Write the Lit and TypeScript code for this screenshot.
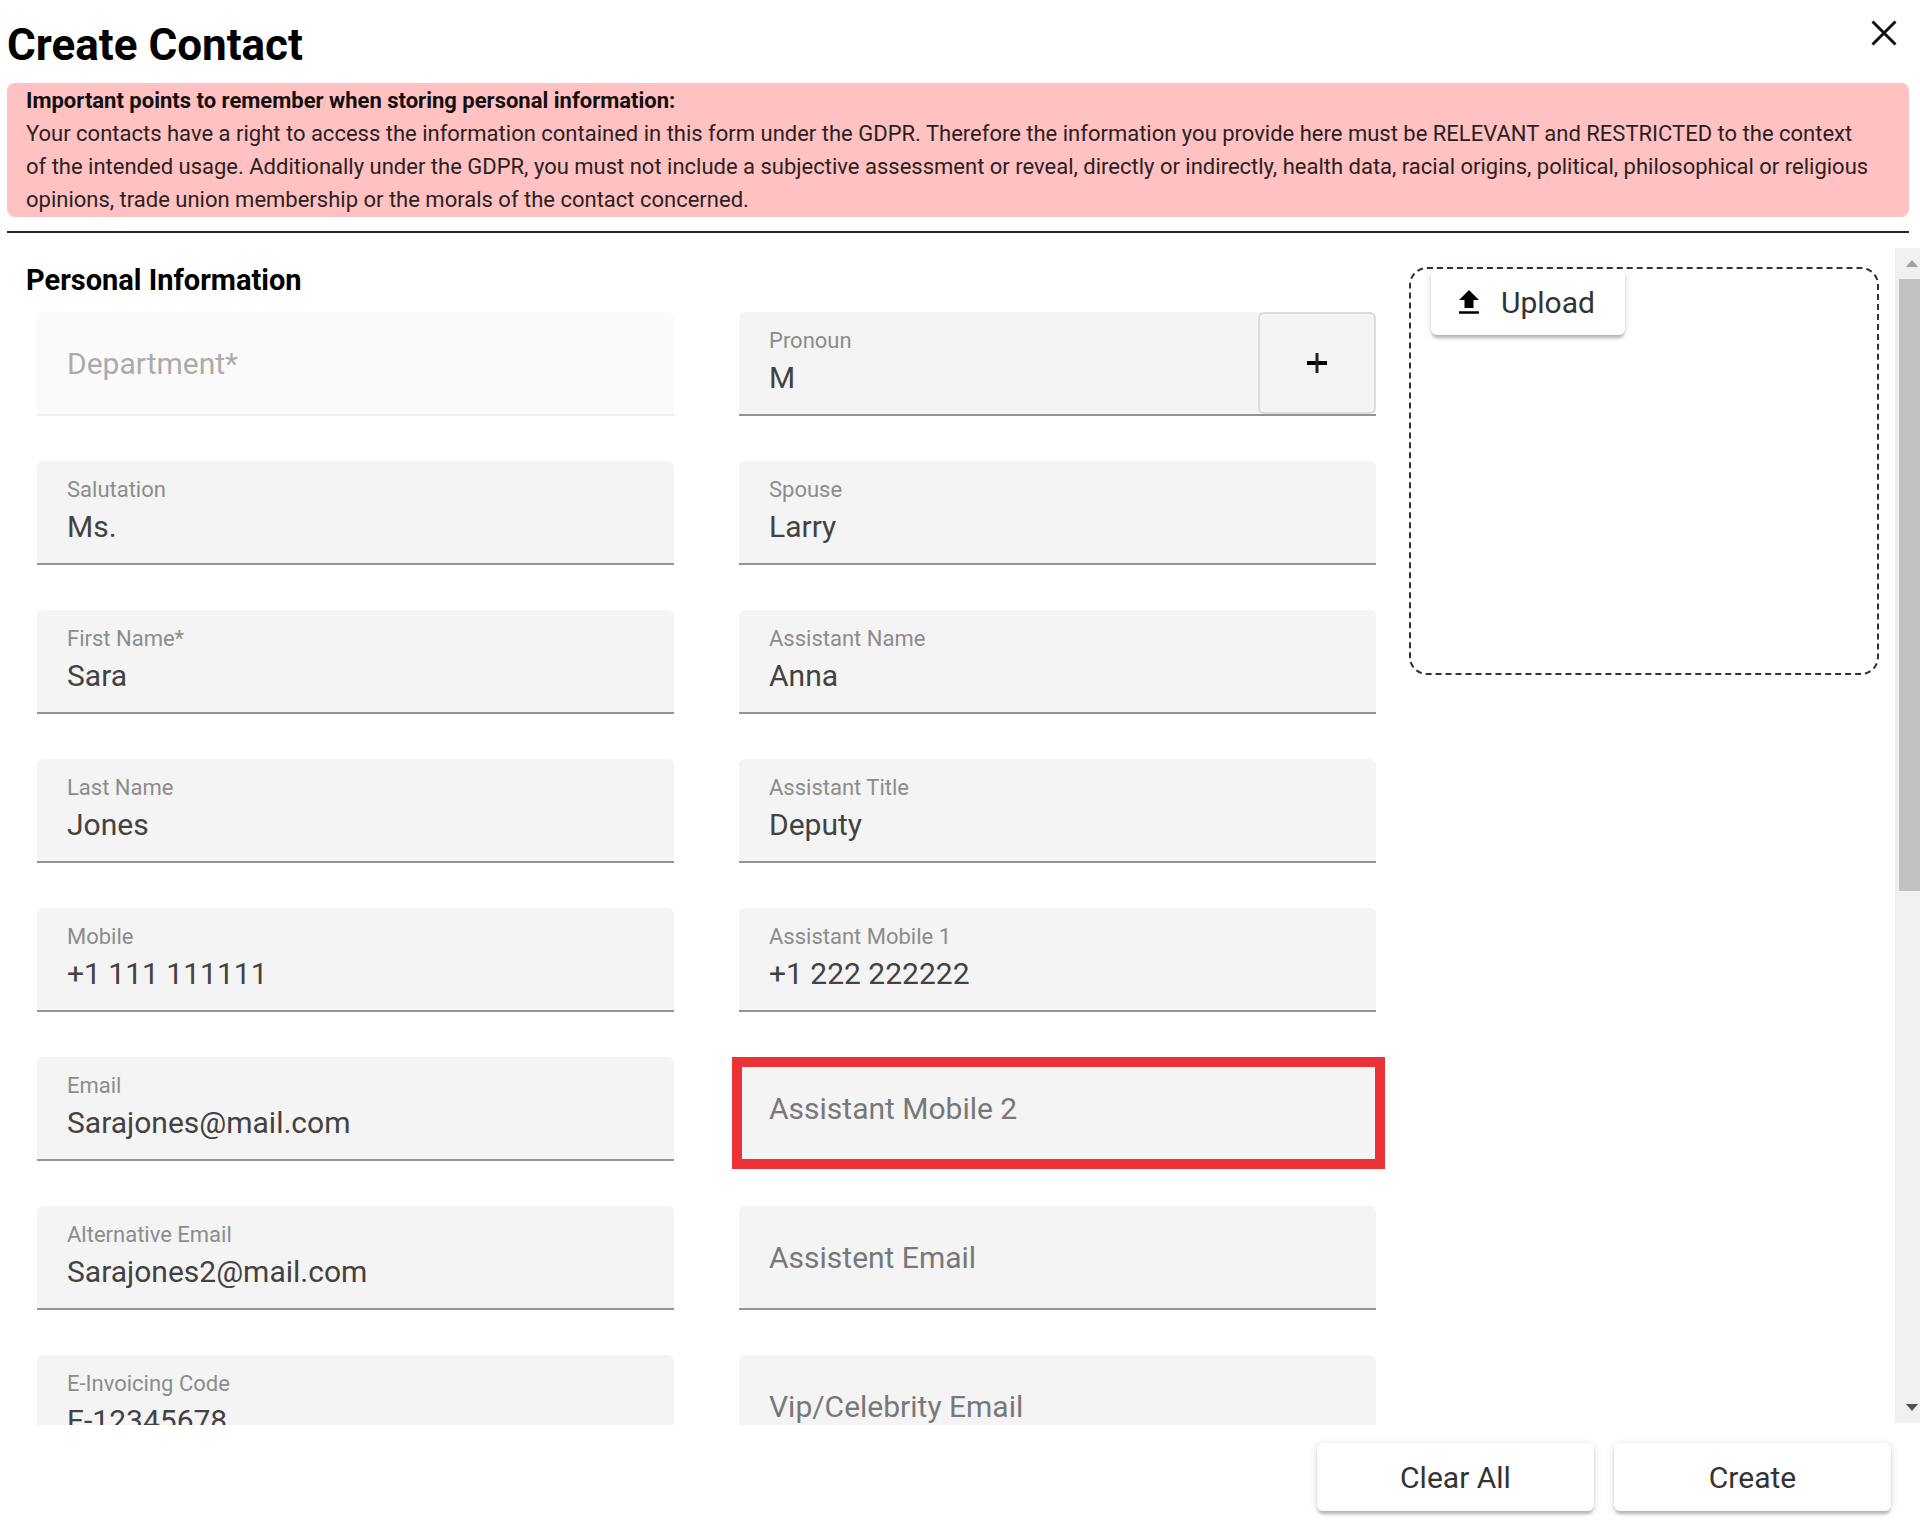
import { LitElement, html, css, nothing } from "lit";
import { customElement, property } from "lit/decorators.js";
import { classMap } from "lit/directives/class-map.js";

interface Field {
  id: string;
  label: string;
  value?: string;
  type?: string;
  disabled?: boolean;
  addable?: boolean;
  highlighted?: boolean;
}

const FIELDS: Field[] = [
  { id: "department", label: "Department*", disabled: true },
  { id: "pronoun", label: "Pronoun", value: "M", addable: true },
  { id: "salutation", label: "Salutation", value: "Ms." },
  { id: "spouse", label: "Spouse", value: "Larry" },
  { id: "first-name", label: "First Name*", value: "Sara" },
  { id: "assistant-name", label: "Assistant Name", value: "Anna" },
  { id: "last-name", label: "Last Name", value: "Jones" },
  { id: "assistant-title", label: "Assistant Title", value: "Deputy" },
  { id: "mobile", label: "Mobile", value: "+1 111 111111", type: "tel" },
  { id: "assistant-mobile-1", label: "Assistant Mobile 1", value: "+1 222 222222", type: "tel" },
  { id: "email", label: "Email", value: "Sarajones@mail.com", type: "email" },
  { id: "assistant-mobile-2", label: "Assistant Mobile 2", type: "tel", highlighted: true },
  { id: "alternative-email", label: "Alternative Email", value: "Sarajones2@mail.com", type: "email" },
  { id: "assistant-email", label: "Assistent Email", type: "email" },
  { id: "e-invoicing-code", label: "E-Invoicing Code", value: "E-12345678" },
  { id: "vip-email", label: "Vip/Celebrity Email", type: "email" },
];

@customElement("contact-field")
export class ContactField extends LitElement {
  @property({ attribute: false }) field!: Field;

  static styles = css`
    :host {
      display: block;
      min-width: 0;
    }
    .field {
      position: relative;
      box-sizing: border-box;
      height: 104px;
      display: flex;
      background: #f4f4f4;
      border-bottom: 2px solid #949494;
      border-radius: 6px 6px 0 0;
    }
    .text {
      flex: 1;
      min-width: 0;
      display: grid;
      grid-template-rows: 26px 48px;
      padding: 16px 30px 0;
    }
    label {
      font-size: 22px;
      line-height: 26px;
      color: #8c8c8c;
    }
    input {
      min-width: 0;
      width: 100%;
      box-sizing: border-box;
      padding: 0;
      border: 0;
      outline: 0;
      background: transparent;
      font: inherit;
      font-size: 30px;
      line-height: 48px;
      color: #424242;
    }
    .empty .text {
      grid-template-rows: 102px;
      padding-top: 0;
    }
    .empty label,
    .empty input {
      grid-area: 1 / 1;
    }
    .empty label {
      font-size: 30px;
      line-height: 104px;
      color: #787878;
      pointer-events: none;
    }
    .disabled {
      background: #fafafa;
      border-bottom-color: #efefef;
    }
    .disabled .text label {
      color: #ababab;
    }
    .add {
      flex: none;
      width: 118px;
      display: grid;
      place-items: center;
      padding: 0;
      background: #f4f4f4;
      border: 2px solid #dcdcdc;
      border-radius: 6px;
    }
    .highlight {
      position: absolute;
      inset: 0 -9px -10px -7px;
      border: 10px solid #ed3237;
      pointer-events: none;
    }
  `;

  render() {
    const f = this.field;
    return html`
      <div class=${classMap({ field: true, empty: !f.value, disabled: !!f.disabled })}>
        <div class="text">
          <label for=${f.id}>${f.label}</label>
          <input id=${f.id} type=${f.type ?? "text"} .value=${f.value ?? ""} ?disabled=${!!f.disabled} />
        </div>
        ${f.addable
          ? html`<button class="add" type="button" aria-label="Add pronoun">
              <svg width="20" height="20" viewBox="0 0 20 20" aria-hidden="true">
                <path d="M0 10H20" stroke="#000" stroke-width="4" />
                <path d="M10 0V20" stroke="#222" stroke-width="3" />
              </svg>
            </button>`
          : nothing}
        ${f.highlighted ? html`<div class="highlight"></div>` : nothing}
      </div>
    `;
  }
}

@customElement("app-root")
export class AppRoot extends LitElement {
  static styles = css`
    :host {
      display: flex;
      flex-direction: column;
      height: 100vh;
      overflow: hidden;
      background: #fff;
      font-family: Roboto, "Liberation Sans", sans-serif;
      color: #000;
    }
    header {
      display: flex;
      justify-content: space-between;
      align-items: flex-start;
      padding: 8px 11px 0 7px;
    }
    h1 {
      margin: 0;
      font-size: 44px;
      line-height: 75px;
      font-weight: 700;
    }
    button {
      font: inherit;
      cursor: pointer;
    }
    .close {
      display: grid;
      place-items: center;
      width: 50px;
      height: 50px;
      padding: 0;
      border: 0;
      background: transparent;
    }
    .notice {
      margin: 0 11px 0 7px;
      padding: 1px 38px 1px 19px;
      border-radius: 8px;
      background: #ffc1c1;
      font-size: 22px;
      line-height: 33px;
      color: #2b2122;
    }
    .notice p {
      margin: 0;
    }
    .notice strong {
      color: #140f0f;
    }
    hr {
      flex: none;
      margin: 14px 11px 15px 7px;
      border: 0;
      height: 2px;
      background: #262626;
    }
    .body {
      flex: 1;
      min-height: 0;
      display: flex;
    }
    .content {
      flex: 1;
      min-width: 0;
      display: flex;
      align-items: flex-start;
      gap: 33px;
      padding-right: 16px;
      overflow-y: auto;
      scrollbar-width: none;
    }
    .form {
      flex: 1;
      min-width: 0;
      padding-left: 26px;
    }
    h2 {
      margin: 0;
      font-size: 29px;
      line-height: 64px;
      font-weight: 700;
    }
    .fields {
      display: grid;
      grid-template-columns: 1fr 1fr;
      gap: 45px 65px;
      padding-left: 11px;
    }
    .photo {
      flex: none;
      box-sizing: border-box;
      width: 470px;
      height: 408px;
      margin-top: 19px;
      padding: 0 20px;
      border: 2px dashed #333;
      border-radius: 18px;
    }
    .raised {
      border: 0;
      border-radius: 6px;
      background: #fff;
      height: 68px;
      font-size: 30px;
      color: #333;
      box-shadow: 0 4px 3px -1px rgba(0, 0, 0, 0.24), 0 1px 8px rgba(0, 0, 0, 0.14);
    }
    .photo .upload {
      display: flex;
      align-items: center;
      gap: 22px;
      height: 66px;
      padding: 0 30px 0 28px;
    }
    .scrollbar {
      flex: none;
      width: 25px;
      box-sizing: border-box;
      display: flex;
      flex-direction: column;
      padding-left: 4px;
      margin-bottom: 2px;
      background: #f0f0f0;
    }
    .arrow {
      flex: none;
      height: 31px;
      display: grid;
      place-items: center;
      padding-left: 5px;
    }
    .track {
      flex: 1;
    }
    .thumb {
      height: 55%;
      background: #c1c1c1;
    }
    footer {
      display: flex;
      justify-content: flex-end;
      gap: 20px;
      padding: 18px 29px 11px;
    }
    .action {
      width: 277px;
    }
  `;

  render() {
    return html`
      <header>
        <h1>Create Contact</h1>
        <button class="close" type="button" aria-label="Close">
          <svg width="26" height="26" viewBox="0 0 26 26" aria-hidden="true">
            <path d="M1.5 1.5L24.500 24.500M24.500 1.5L1.500 24.500" stroke="#111" stroke-width="3" />
          </svg>
        </button>
      </header>
      <section class="notice">
        <p><strong>Important points to remember when storing personal information:</strong></p>
        <p>
          Your contacts have a right to access the information contained in this form under the GDPR. Therefore the
          information you provide here must be RELEVANT and RESTRICTED to the context of the intended usage.
          Additionally under the GDPR, you must not include a subjective assessment or reveal, directly or indirectly,
          health data, racial origins, political, philosophical or religious opinions, trade union membership or the
          morals of the contact concerned.
        </p>
      </section>
      <hr />
      <div class="body">
        <div class="content">
          <section class="form">
            <h2>Personal Information</h2>
            <div class="fields">${FIELDS.map((f) => html`<contact-field .field=${f}></contact-field>`)}</div>
          </section>
          <aside class="photo">
            <button class="raised upload" type="button">
              <svg width="20" height="24" viewBox="0 0 20 24" aria-hidden="true">
                <path d="M10 0L20 10H14.500V18H5.500V10H0Z" fill="#000" />
                <path d="M0 22.500H20" stroke="#000" stroke-width="2.500" />
              </svg>
              <span>Upload</span>
            </button>
          </aside>
        </div>
        <div class="scrollbar" aria-hidden="true">
          <div class="arrow">
            <svg width="12" height="7" viewBox="0 0 12 7"><path d="M0 7L6 0L12 7Z" fill="#a3a3a3" /></svg>
          </div>
          <div class="track"><div class="thumb"></div></div>
          <div class="arrow">
            <svg width="12" height="7" viewBox="0 0 12 7"><path d="M0 0L6 7L12 0Z" fill="#505050" /></svg>
          </div>
        </div>
      </div>
      <footer>
        <button class="raised action" type="button">Clear All</button>
        <button class="raised action" type="button">Create</button>
      </footer>
    `;
  }
}
